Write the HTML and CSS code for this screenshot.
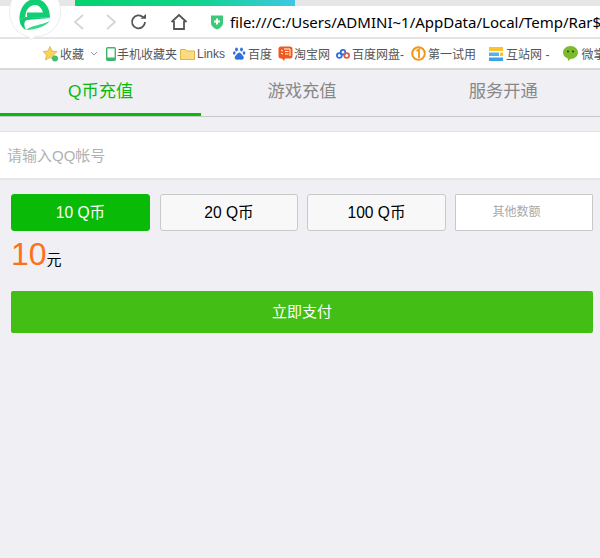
FILE: index.html
```html
<!DOCTYPE html>
<html lang="zh">
<head>
<meta charset="utf-8">
<title>Q币充值</title>
<link rel="stylesheet" href="styles.css">
</head>
<body>
<header class="chrome">
  <div class="tabstrip"><div class="tabfill"></div></div>
  <svg class="logo" width="62" height="41" viewBox="0 0 62 41">
    <path d="M31 39.500 L28 36.500 C17 34.500 9.500 24 9.500 12 C9.500 6 11 2 13 -3 L57 -3 C59 2 60.500 6 60.500 12 C60.500 25 50 36.500 35 36.800 Z" fill="#fff" stroke="#ececec"/>
    <path d="M19.500 20 C19 8 26 -1 35 -1 C44 -1 50 7 50 17.500 L27 17.500 L27 12.500 L43 12.500 C41.500 7.500 38.500 5 35 5 C29 5 25 11 25.500 17 L19.500 20 Z" fill="#0fce73"/>
    <path d="M19.500 20 L25.500 17 L50 17.500 L50 18 L27 20 C24 21 23.500 25 26 30 C22 28 20 24 19.500 20 Z" fill="#14c774"/>
    <path d="M50 21 C45 27 36 29.500 26 30 C32 25 42 25 50 21 Z" fill="#35d888"/>
  </svg>
  <div class="toolbar">
    <div class="navs">
      <svg width="14" height="18" viewBox="0 0 14 18"><path d="M11 2 L3 9 L11 16" class="ic-off"/></svg>
      <svg class="nav-next" width="14" height="18" viewBox="0 0 14 18"><path d="M3 2 L11 9 L3 16" class="ic-off"/></svg>
      <svg class="nav-reload" width="18" height="18" viewBox="0 0 18 18"><path d="M15 9 A6.500 6.500 0 1 1 13 4.200" class="ic-on"/><path d="M10.500 5.800 L16 5.800 L16 1 Z" fill="#555"/></svg>
      <svg class="nav-home" width="18" height="18" viewBox="0 0 18 18"><path d="M1.500 9 L9 2 L16.500 9 M4 8 V16 H14 V8" class="ic-on"/></svg>
    </div>
    <div class="sep"></div>
    <svg class="shield" width="14" height="16" viewBox="0 0 14 16"><path d="M1 1.500 H13 V9 C13 12 10 14.500 7 15.500 C4 14.500 1 12 1 9 Z" fill="#3ec97a"/><path d="M7 4.500 V10.500 M4 7.500 H10" stroke="#fff" stroke-width="2"/></svg>
    <span class="url">file:///C:/Users/ADMINI~1/AppData/Local/Temp/Rar$</span>
  </div>
  <nav class="bookmarks">
    <svg class="bm-toggle" width="12" height="12" viewBox="0 0 12 12"><path d="M1.500 1 V11 M5 1 L10 6 L5 11" fill="none" stroke="#666" stroke-width="1"/></svg>
    <span class="bm bm-fav">
      <svg width="16" height="16" viewBox="0 0 16 16"><path d="M7 .5 L9 5 L14 5.500 L10.500 9 L11.500 14 L7 11.500 L2.500 14 L3.500 9 L0 5.500 L5 5 Z" fill="#f7d35c" stroke="#d9a73a" stroke-width=".7"/><circle cx="12" cy="12.500" r="3" fill="#3fbf6f"/></svg>收藏<svg class="caret" width="8" height="5" viewBox="0 0 8 5"><path d="M1 1 L4 4 L7 1" fill="none" stroke="#999"/></svg>
    </span>
    <span class="bm bm-phone"><svg width="10" height="14" viewBox="0 0 10 14"><rect x=".7" y=".7" width="8.600" height="12.600" rx="1" fill="#fff" stroke="#3db76a" stroke-width="1.400"/><rect x="1" y="10.500" width="8" height="2.500" fill="#3db76a"/></svg>手机收藏夹</span>
    <span class="bm bm-links"><svg width="15" height="12" viewBox="0 0 15 12"><path d="M.5 1.500 H5.500 L7 3 H14.500 V11.500 H.5 Z" fill="#fbdc7e" stroke="#e0b548"/></svg>Links</span>
    <span class="bm bm-bd"><svg width="13" height="14" viewBox="0 0 13 14"><g fill="#2f6fe0"><ellipse cx="3.500" cy="2.500" rx="1.400" ry="2"/><ellipse cx="8.500" cy="2.500" rx="1.400" ry="2"/><ellipse cx="1.300" cy="6" rx="1.300" ry="1.700"/><ellipse cx="11" cy="6" rx="1.300" ry="1.700"/><path d="M6.200 5.500 C8 5.500 9 8 10.500 9.500 C11.500 11.500 10 13 8 12.800 L6.200 12.500 L4.500 12.800 C2.500 13 1 11.500 2 9.500 C3.500 8 4.500 5.500 6.200 5.500 Z"/></g></svg>百度</span>
    <span class="bm bm-tb"><svg width="15" height="16" viewBox="0 0 15 16"><path d="M3 .5 H12 Q14.500 .5 14.500 3 V10 Q14.500 12.500 12 12.500 H7 L6 15 L4 12.500 H3 Q.5 12.500 .5 10 V3 Q.5 .5 3 .5 Z" fill="#f0591e"/><path d="M3 4 L5 5 M3 7 L5 8 M6 3 H12 V10 M7 5.500 H10.500 M7 8 H10.500" fill="none" stroke="#fff"/></svg>淘宝网</span>
    <span class="bm bm-pan"><svg width="14" height="10" viewBox="0 0 14 10"><g fill="none" stroke-width="1.800"><circle cx="7" cy="3.200" r="2.300" stroke="#2f6fe0"/><circle cx="3.300" cy="6.500" r="2.400" stroke="#2f6fe0"/><circle cx="10.700" cy="6.500" r="2.400" stroke="#e2574c"/></g></svg>百度网盘-</span>
    <span class="bm bm-try"><svg width="15" height="15" viewBox="0 0 15 15"><circle cx="7.500" cy="7.500" r="6.300" fill="#fff" stroke="#f6950f" stroke-width="2"/><path d="M5.500 5 L8 3.500 V12" fill="none" stroke="#f6950f" stroke-width="1.800"/></svg>第一试用</span>
    <span class="bm bm-hz"><svg width="16" height="16" viewBox="0 0 16 16"><path d="M1 1 H15 V5 H1 Z" fill="#f9c22e"/><path d="M1 6.500 H11 V10 H1 Z" fill="#4db5ee"/><path d="M12 6.500 H15 V10 H12 Z" fill="#f9c22e"/><path d="M1 11.500 H15 V15 H1 Z" fill="#3aa4e0"/></svg>互站网 -</span>
    <span class="bm bm-wx"><svg width="17" height="17" viewBox="0 0 17 17"><path d="M8.500 1 C13 1 16 4 16 7.500 C16 11 13 14 8.500 14 L6 16 L5.800 13.500 C3 12.500 1 10.500 1 7.500 C1 4 4 1 8.500 1 Z" fill="#7dbb2c"/><circle cx="6" cy="6.500" r="1" fill="#333"/><circle cx="11" cy="6.500" r="1" fill="#333"/></svg>微掌</span>
  </nav>
</header>

<main class="page">
  <div class="tabs">
    <div class="tab tab-active">Q币充值</div>
    <div class="tab">游戏充值</div>
    <div class="tab">服务开通</div>
  </div>
  <div class="account">请输入QQ帐号</div>
  <div class="amounts">
    <div class="amount amount-active">10 Q币</div>
    <div class="amount">20 Q币</div>
    <div class="amount">100 Q币</div>
    <div class="amount amount-other">其他数额</div>
  </div>
  <div class="price"><span class="price-num">10</span><span class="price-unit">元</span></div>
  <div class="pay">立即支付</div>
</main>
</body>
</html>
```

FILE: styles.css
```css
* {
  box-sizing: border-box;
}

html,
body {
  margin: 0;
  height: 100%;
}

body {
  width: 600px;
  height: 558px;
  overflow: hidden;
  background: #efeff4;
  font-family: "Liberation Sans", "Noto Sans CJK SC", sans-serif;
  color: #000;
}

.chrome {
  position: relative;
  height: 70px;
  overflow: hidden;
  background: #fff;
  border-bottom: 2px solid #d8d8d8;
}

.tabstrip {
  height: 6px;
  background: #e6e6e6;
  padding-left: 75px;
}

.tabfill {
  width: 220px;
  height: 6px;
  background: linear-gradient(90deg, #04d26e 0%, #0fd58a 55%, #3fc7e4 100%);
}

.logo {
  position: absolute;
  left: 0;
  top: 0;
}

.toolbar {
  display: flex;
  align-items: center;
  height: 33px;
  padding-left: 72px;
  border-bottom: 2px solid #e4e4e4;
}

.navs {
  display: flex;
  align-items: center;
}

.nav-next {
  margin-left: 18px;
}

.nav-reload {
  margin-left: 12px;
}

.nav-home {
  margin-left: 22px;
}

.ic-off {
  fill: none;
  stroke: #d5d5d5;
  stroke-width: 1.800;
}

.ic-on {
  fill: none;
  stroke: #555;
  stroke-width: 1.800;
}

.sep {
  width: 1px;
  height: 18px;
  margin-left: 14px;
  background: #d8d8d8;
}

.shield {
  margin-left: 8px;
  flex: none;
}

.url {
  margin-left: 6px;
  font-family: "Noto Sans", "Liberation Sans", sans-serif;
  font-size: 15px;
  white-space: nowrap;
}

.bookmarks {
  display: flex;
  align-items: center;
  height: 29px;
  padding-left: 14px;
  font-size: 12px;
  color: #555;
  white-space: nowrap;
}

.bm {
  display: inline-flex;
  align-items: center;
  flex: none;
  gap: 1px;
}

.bm-fav {
  margin-left: 29px;
}

.caret {
  margin-left: 5px;
}

.bm-phone {
  margin-left: 8px;
}

.bm-links {
  margin-left: 3px;
  gap: 2px;
}

.bm-bd {
  margin-left: 8px;
  gap: 2px;
}

.bm-tb {
  margin-left: 6px;
}

.bm-pan {
  margin-left: 6px;
  gap: 2px;
}

.bm-try {
  margin-left: 7px;
  gap: 2px;
}

.bm-hz {
  margin-left: 12px;
  gap: 2px;
}

.bm-wx {
  margin-left: 13px;
  gap: 2px;
}

.tabs {
  display: flex;
  width: 604px;
  height: 47px;
  border-bottom: 1px solid #c8c8c8;
}

.tab {
  flex: 1;
  height: 46px;
  line-height: 43px;
  text-align: center;
  font-size: 17.300px;
  color: #888;
}

.tab-active {
  color: #09bb07;
  border-bottom: 3px solid #09bb07;
}

.account {
  height: 49px;
  margin-top: 14px;
  padding-left: 7px;
  line-height: 47px;
  font-size: 15px;
  color: #b2b2b2;
  background: #fff;
  border-top: 1px solid #e2e2e2;
  border-bottom: 2px solid #e6e6e9;
}

.amounts {
  display: flex;
  gap: 9px;
  width: 582px;
  margin: 14px 0 0 11px;
}

.amount {
  flex: none;
  width: 138px;
  height: 37px;
  line-height: 35px;
  text-align: center;
  font-size: 15.600px;
  background: #f8f8f8;
  border: 1px solid #c9c9c9;
  border-radius: 3px;
}

.amount-active {
  width: 139px;
  margin-right: 1px;
  color: #fff;
  background: #09bb07;
  border-color: #09bb07;
}

.amount:nth-child(3) {
  width: 139px;
}

.amount-other {
  padding-right: 15px;
  font-size: 12px;
  color: #a9a9a9;
  background: #fff;
  border-radius: 1px;
}

.price {
  height: 60px;
  padding: 5px 0 0 11px;
}

.price-num {
  font-size: 32px;
  line-height: 37px;
  color: #ff6f1c;
}

.price-unit {
  font-size: 15px;
}

.pay {
  width: 582px;
  height: 42px;
  margin-left: 11px;
  line-height: 42px;
  text-align: center;
  font-size: 15px;
  color: #fff;
  background: #43be15;
  border-radius: 2px;
}
```
